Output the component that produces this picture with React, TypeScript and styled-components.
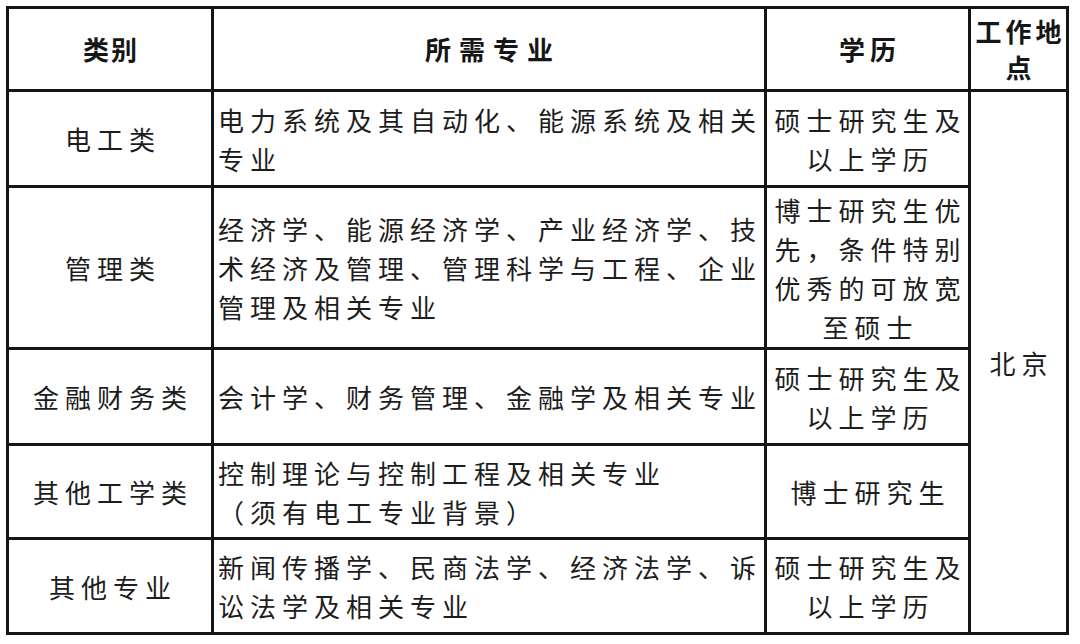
import React from "react";
import styled, { createGlobalStyle } from "styled-components";

const GlobalStyle = createGlobalStyle`
    html, body {
        margin: 0;
        padding: 0;
        background: #ffffff;
    }
    body {
        font-family: "Noto Sans CJK SC", "Noto Sans", sans-serif;
        color: #1d1d1d;
    }
`;

const Page = styled.div`
    padding: 6px 0 0 6px;
`;

const Table = styled.div`
    display: grid;
    width: max-content;
    grid-template-columns: 202px 550px 201px 95px;
    grid-template-rows: 80px 93px 159px 93px 91px 92px;
    gap: 3px;
    border: 3px solid #151515;
    background: #151515;
`;

const Cell = styled.div<{ $align?: "left" | "center"; $span?: number }>`
    background: #ffffff;
    display: flex;
    flex-direction: column;
    justify-content: center;
    align-items: ${(p) => (p.$align === "left" ? "flex-start" : "center")};
    padding: ${(p) => (p.$align === "left" ? "0 0 0 4px" : "0")};
    grid-row: ${(p) => (p.$span ? `span ${p.$span}` : "auto")};
    font-size: 26px;
    line-height: 39px;
`;

const HeadCell = styled(Cell)`
    font-weight: 700;
    font-size: 26px;
    line-height: 36px;
    color: #161616;
`;

const Line = styled.span<{ $spacing?: number }>`
    display: block;
    white-space: nowrap;
    letter-spacing: ${(p) => p.$spacing ?? 6}px;
    margin-right: ${(p) => -(p.$spacing ?? 6)}px;
`;

type Row = {
    category: string;
    majors: string[];
    degree: string[];
};

const rows: Row[] = [
    {
        category: "电工类",
        majors: ["电力系统及其自动化、能源系统及相关", "专业"],
        degree: ["硕士研究生及", "以上学历"],
    },
    {
        category: "管理类",
        majors: [
            "经济学、能源经济学、产业经济学、技",
            "术经济及管理、管理科学与工程、企业",
            "管理及相关专业",
        ],
        degree: ["博士研究生优", "先，条件特别", "优秀的可放宽", "至硕士"],
    },
    {
        category: "金融财务类",
        majors: ["会计学、财务管理、金融学及相关专业"],
        degree: ["硕士研究生及", "以上学历"],
    },
    {
        category: "其他工学类",
        majors: ["控制理论与控制工程及相关专业", "（须有电工专业背景）"],
        degree: ["博士研究生"],
    },
    {
        category: "其他专业",
        majors: ["新闻传播学、民商法学、经济法学、诉", "讼法学及相关专业"],
        degree: ["硕士研究生及", "以上学历"],
    },
];

const App: React.FC = () => {
    return (
        <Page>
            <GlobalStyle />
            <Table>
                <HeadCell>
                    <Line $spacing={2}>类别</Line>
                </HeadCell>
                <HeadCell>
                    <Line $spacing={8}>所需专业</Line>
                </HeadCell>
                <HeadCell>
                    <Line $spacing={5}>学历</Line>
                </HeadCell>
                <HeadCell>
                    <Line $spacing={4}>工作地</Line>
                    <Line $spacing={4}>点</Line>
                </HeadCell>

                {rows.map((row, i) => (
                    <React.Fragment key={row.category}>
                        <Cell>
                            <Line>{row.category}</Line>
                        </Cell>
                        <Cell $align="left">
                            {row.majors.map((m) => (
                                <Line key={m}>{m}</Line>
                            ))}
                        </Cell>
                        <Cell>
                            {row.degree.map((d) => (
                                <Line key={d}>{d}</Line>
                            ))}
                        </Cell>
                        {i === 0 && (
                            <Cell $span={5}>
                                <Line>北京</Line>
                            </Cell>
                        )}
                    </React.Fragment>
                ))}
            </Table>
        </Page>
    );
};

export default App;
